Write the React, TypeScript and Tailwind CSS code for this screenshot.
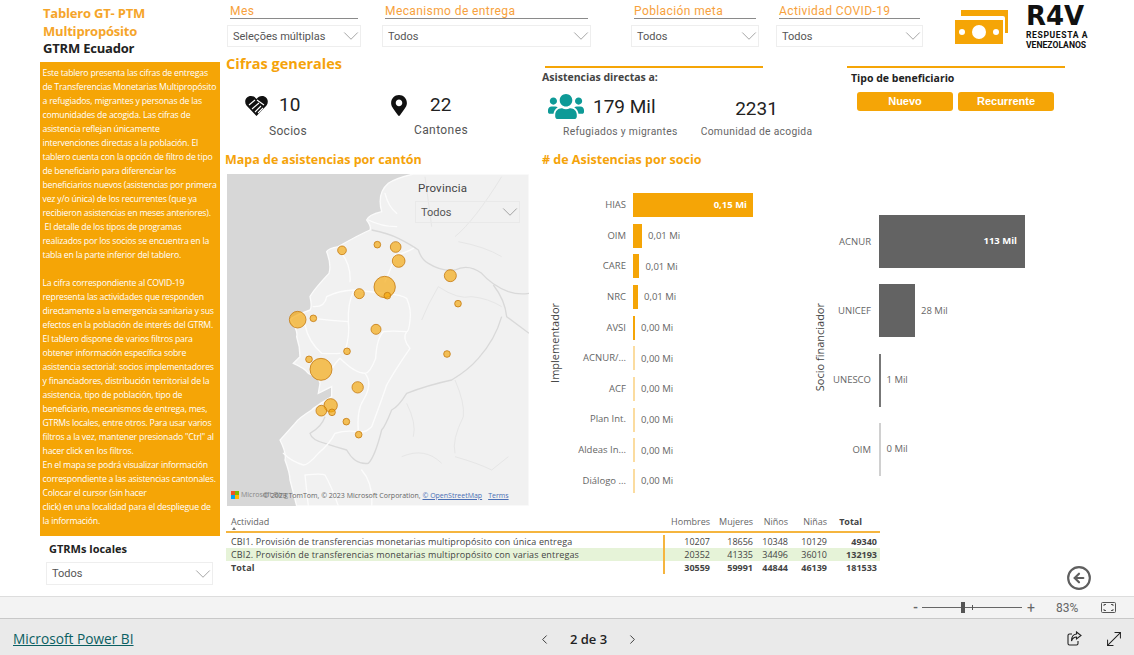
import { ChevronDown, ChevronLeft, ChevronRight, CircleArrowLeft, MoveDiagonal } from "lucide-react";
import { FaMapMarkerAlt, FaUsers } from "react-icons/fa";

const panelLines = [
  "Este tablero presenta las cifras de entregas",
  "de Transferencias Monetarias Multipropósito",
  "a refugiados, migrantes y personas de las",
  "comunidades de acogida. Las cifras de",
  "asistencia reflejan únicamente",
  "intervenciones directas a la población. El",
  "tablero cuenta con la opción de filtro de tipo",
  "de beneficiario para diferenciar los",
  "beneficiarios nuevos (asistencias por primera",
  "vez y/o única) de los recurrentes (que ya",
  "recibieron asistencias en meses anteriores).",
  "\u00a0El detalle de los tipos de programas",
  "realizados por los socios se encuentra en la",
  "tabla en la parte inferior del tablero.",
  "\u00a0",
  "La cifra correspondiente al COVID-19",
  "representa las actividades que responden",
  "directamente a la emergencia sanitaria y sus",
  "efectos en la población de interés del GTRM.",
  "El tablero dispone de varios filtros para",
  "obtener información específica sobre",
  "asistencia sectorial: socios implementadores",
  "y financiadores, distribución territorial de la",
  "asistencia, tipo de población, tipo de",
  "beneficiario, mecanismos de entrega, mes,",
  "GTRMs locales, entre otros. Para usar varios",
  "filtros a la vez, mantener presionado \"Ctrl\" al",
  "hacer click en los filtros.",
  "En el mapa se podrá visualizar información",
  "correspondiente a las asistencias cantonales.",
  "Colocar el cursor (sin hacer",
  "click) en una localidad para el despliegue de",
  "la información.",
];

const bubbles = [
  [351, 241, 13], [457, 224, 10], [512, 231, 16], [521, 273, 19], [676, 317, 18], [479, 351, 32],
  [487, 377, 10], [403, 371, 15], [699, 401, 10], [218, 449, 25], [265, 445, 10], [453, 478, 15],
  [366, 544, 10], [666, 552, 10], [252, 568, 10], [288, 598, 33], [398, 652, 17], [317, 706, 20],
  [289, 722, 16], [321, 727, 10], [364, 755, 10], [401, 794, 10],
];

const roads = [
  "M350 250 Q378 285 375 335",
  "M265 410 Q300 412 305 380 Q340 362 385 360 Q440 365 485 370 Q530 375 545 385 Q560 420 555 450 Q552 485 545 485 Q500 482 475 485",
  "M385 365 Q368 400 370 455 Q375 495 360 545",
  "M265 445 Q320 452 370 455",
  "M240 465 Q250 515 290 550 Q320 552 345 550",
  "M475 485 Q455 505 452 565 Q435 610 420 610 Q390 610 345 565 Q325 585 320 600",
  "M545 485 Q530 505 555 535 Q510 600 485 645 Q470 690 440 770 Q420 790 400 785 Q360 780 330 790 Q315 820 280 850 Q250 885 235 885 Q200 875 175 850",
  "M420 610 Q445 640 415 690 Q395 720 400 785",
  "M480 335 Q505 280 510 255 Q540 250 565 235",
  "M240 915 Q290 910 300 915 Q320 950 340 1008 M240 915 L250 1008 M410 900 Q445 940 440 1008",
  "M480 70 Q490 110 515 130 M430 150 Q470 170 515 170",
];

const implementers = [
  { name: "HIAS", w: 120, value: "0,15 Mi", light: false },
  { name: "OIM", w: 8.5, value: "0,01 Mi", light: false },
  { name: "CARE", w: 6, value: "0,01 Mi", light: false },
  { name: "NRC", w: 4.5, value: "0,01 Mi", light: false },
  { name: "AVSI", w: 1.5, value: "0,00 Mi", light: false },
  { name: "ACNUR/...", w: 1.5, value: "0,00 Mi", light: true },
  { name: "ACF", w: 1.5, value: "0,00 Mi", light: true },
  { name: "Plan Int.", w: 1.5, value: "0,00 Mi", light: true },
  { name: "Aldeas In...", w: 1.5, value: "0,00 Mi", light: true },
  { name: "Diálogo ...", w: 1.5, value: "0,00 Mi", light: true },
];

const funders = [
  { name: "ACNUR", w: 146, value: "113 Mil", color: "bg-[#636363]" },
  { name: "UNICEF", w: 36, value: "28 Mil", color: "bg-[#636363]" },
  { name: "UNESCO", w: 1.5, value: "1 Mil", color: "bg-[#777777]" },
  { name: "OIM", w: 1.5, value: "0 Mil", color: "bg-[#d0d0d0]" },
];

const tableRows = [
  { name: "CBI1. Provisión de transferencias monetarias multipropósito con única entrega", cells: ["10207", "18656", "10348", "10129", "49340"], bold: false, tint: "" },
  { name: "CBI2. Provisión de transferencias monetarias multipropósito con varias entregas", cells: ["20352", "41335", "34496", "36010", "132193"], bold: false, tint: "bg-[#e6f3d8]" },
  { name: "Total", cells: ["30559", "59991", "44844", "46139", "181533"], bold: true, tint: "" },
];

function Dropdown({ label, className = "" }: { label: string; className?: string }) {
  return (
    <div className={`flex h-[22px] items-center justify-between overflow-hidden border border-[#eeeeee] bg-white pl-[5px] font-['Roboto',sans-serif] text-[11px] text-[#555555] ${className}`}>
      <span className="pt-[2px]">{label}</span>
      <ChevronDown className="-mr-[4px] h-[26px] w-[26px] shrink-0 text-[#8a8a8a]" strokeWidth={0.7} />
    </div>
  );
}

function Filter({ title, value, width, className = "" }: { title: string; value: string; width: string; className?: string }) {
  return (
    <div className={`shrink-0 ${width} ${className}`}>
      <div className="mx-[3px] h-[16px] border-b border-[#8a8a8a] pt-[2px] font-['Roboto',sans-serif] text-[12px] leading-[13px] tracking-[0.4px] text-[#f7a13c]">{title}</div>
      <Dropdown label={value} className="mt-[6px]" />
    </div>
  );
}

function MoneyIcon() {
  return (
    <svg width="53" height="34" viewBox="0 0 53 34" className="shrink-0">
      <path d="M6 0 H18 Q24 -1 30 0 H53 V23 H50 V8 Q50 6 48 6 H6 Z" fill="#f5a506" />
      <rect x="0" y="10" width="48" height="24" fill="#f5a506" />
      <circle cx="24" cy="22" r="7" fill="#fff" />
      <circle cx="7" cy="22" r="3" fill="#fff" />
      <circle cx="41" cy="22" r="3" fill="#fff" />
    </svg>
  );
}

function HeartHands() {
  return (
    <svg width="23" height="21" viewBox="0 0 23 21" className="shrink-0">
      <path d="M11.5 21 L1.5 10.5 C-1.5 6.5 1 1 6 1 C8.5 1 10 2 11.5 4 C13 2 14.5 1 17 1 C22 1 24.5 6.5 21.5 10.5 Z" fill="#111" />
      <path d="M4 10 L10 5 M7 14 L14 8 M10 17 L16 11 M13 18 L18 13 M12 5 L19 10" stroke="#fff" strokeWidth="1.1" fill="none" />
    </svg>
  );
}

function ShareIcon() {
  return (
    <svg width="15" height="15" viewBox="0 0 15 15" fill="none" stroke="#222222" strokeWidth="1.1" className="shrink-0">
      <path d="M5 3 H2.5 Q1 3 1 4.5 V12.5 Q1 14 2.5 14 H9.5 Q11 14 11 12.5 V10" />
      <path d="M9.5 1 L14 4.5 L9.5 8 V6 Q6 6 4.5 10 Q4.5 3.5 9.5 3 Z" />
    </svg>
  );
}

function EcuadorMap() {
  return (
    <div className="relative ml-[2px] h-[332px] w-[302px] overflow-hidden">
      <svg viewBox="6 12 906 996" className="h-full w-full">
        <rect x="6" y="12" width="906" height="996" fill="#d7d7d7" />
        <path
          d="M565 12 Q510 25 490 40 Q455 70 470 125 Q430 135 425 150 Q440 170 435 180 Q400 195 340 230 Q310 235 305 245 Q320 285 312 310 Q265 360 255 380 Q262 410 255 420 Q200 440 195 450 Q220 480 215 500 Q225 530 225 560 L205 580 Q240 595 250 610 Q285 625 285 640 L280 670 L320 650 L320 680 Q270 710 260 720 Q220 745 210 760 L165 810 Q185 850 180 870 Q195 910 195 930 L215 1008 L912 1008 L912 12 Z"
          fill="#f1f1f1"
          stroke="#fbfbfb"
          strokeWidth="4"
        />
        <path
          d="M440 180 Q490 190 520 205 Q560 225 580 240 Q590 270 610 280 Q650 305 690 300 Q730 280 770 310 Q800 345 850 365 Q880 375 912 370 M805 345 Q840 390 845 440 L912 490 M830 440 Q810 510 760 565 Q730 600 680 630 Q610 645 545 670 Q520 710 500 720 Q480 770 470 780 Q450 860 430 880 Q390 885 365 840 Q330 830 300 820 Q260 810 255 790 Q290 770 300 740"
          fill="none"
          stroke="#d9d9d9"
          strokeWidth="4"
          strokeLinejoin="round"
        />
        <path
          d="M590 450 Q610 400 640 350 Q700 390 740 380 Q790 385 830 410 M530 860 Q600 830 650 880 M690 630 Q720 700 715 740 Q680 810 690 850 M545 700 Q575 760 565 800 M690 860 Q760 880 800 900 L850 860 M620 170 Q615 130 600 20 M690 200 Q750 150 830 20 M700 215 Q780 230 830 260"
          fill="none"
          stroke="#e6e6e6"
          strokeWidth="3"
        />
        {roads.map((d, i) => (
          <path key={i} d={d} fill="none" stroke="#fcfcfc" strokeWidth="4" strokeLinejoin="round" strokeLinecap="round" />
        ))}
        {bubbles.map(([cx, cy, r], i) => (
          <circle key={i} cx={cx} cy={cy} r={r} fill="#f5a506" fillOpacity="0.66" stroke="#c47a12" strokeWidth="2.4" />
        ))}
      </svg>

      {/* slicer que queda encima del mapa */}
      <div className="absolute left-[188px] top-[7px] w-[105px]">
        <div className="pl-[3px] font-['Roboto',sans-serif] text-[11.5px] leading-[14px] tracking-[0.2px] text-[#444444]">Provincia</div>
        <div className="mt-[6px] flex h-[22px] items-center justify-between overflow-hidden border border-[#e9e9e9] pl-[5px] font-['Roboto',sans-serif] text-[11px] text-[#555555]">
          <span className="pt-[2px]">Todos</span>
          <ChevronDown className="-mr-[4px] h-[26px] w-[26px] shrink-0 text-[#8a8a8a]" strokeWidth={0.7} />
        </div>
      </div>

      {/* marca de Bing y creditos, en el original van solapados */}
      <div className="absolute bottom-[7px] left-[4px] flex items-center">
        <span className="grid h-[8px] w-[8px] grid-cols-2">
          <i className="bg-[#f25022]" />
          <i className="bg-[#7fba00]" />
          <i className="bg-[#00a4ef]" />
          <i className="bg-[#ffb900]" />
        </span>
        <span className="ml-[2px] whitespace-nowrap text-[7px] leading-[8px] text-[#888888]">Microsoft Bing</span>
      </div>
      <div className="absolute bottom-[5px] left-[36px] whitespace-nowrap font-['Open_Sans',sans-serif] text-[7px] leading-[10px] text-[#666666]">
        <span>© 2023 TomTom, © 2023 Microsoft Corporation, </span>
        <span className="text-[#4a6fb5] underline">© OpenStreetMap</span>
        <span className="ml-[6px] text-[#4a6fb5] underline">Terms</span>
      </div>
    </div>
  );
}

export default function App() {
  return (
    <div className="flex h-[655px] w-[1134px] flex-col overflow-hidden bg-white font-['Open_Sans',sans-serif]">
      <div className="flex h-[596px] shrink-0 pl-[40px]">
        {/* columna izquierda */}
        <div className="w-[180px] shrink-0">
          <div className="h-[62px] pl-[3px] pt-[5px] text-[13px] font-bold leading-[17.5px] tracking-[-0.2px]">
            <div className="text-[#f5a52a]">Tablero GT- PTM</div>
            <div className="text-[#f5a52a]">Multipropósito</div>
            <div className="text-[#222222]">GTRM Ecuador</div>
          </div>
          <div className="h-[474px] bg-[#f5a506] pl-[2.5px] pt-[4px] text-[8.7px] leading-[14px] tracking-[-0.2px] text-white">
            {panelLines.map((line, i) => (
              <div key={i} className="whitespace-nowrap">{line}</div>
            ))}
          </div>
          <div className="pl-[9px] pt-[5px] text-[11px] font-bold leading-[16px] text-[#222222]">GTRMs locales</div>
          <Dropdown label="Todos" className="ml-[6px] mt-[5px] !h-[23px] w-[167px]" />
        </div>

        <div className="ml-[5px] w-[909px] shrink-0">
          {/* filtros */}
          <div className="flex h-[46px] items-start pl-[2px] pt-[3px]">
            <Filter title="Mes" value="Seleções múltiplas" width="w-[134px]" />
            <Filter title="Mecanismo de entrega" value="Todos" width="w-[209px]" className="ml-[21px]" />
            <Filter title="Población meta" value="Todos" width="w-[128px]" className="ml-[40px]" />
            <Filter title="Actividad COVID-19" value="Todos" width="w-[147px]" className="ml-[17px]" />
            <div className="ml-[32px] mt-[7px]">
              <MoneyIcon />
            </div>
            <div className="ml-[18px] w-[62px] shrink-0 whitespace-nowrap font-['Roboto',sans-serif] text-[#111111]">
              <div className="h-[26px] font-['DejaVu_Sans',sans-serif] text-[26px] font-bold leading-[26px]">R4V</div>
              <div className="mt-[1px] text-[8.6px] font-bold leading-[10px] tracking-[0.6px]">RESPUESTA A</div>
              <div className="text-[8.6px] font-bold leading-[10px]">VENEZOLANOS</div>
            </div>
          </div>

          {/* cifras */}
          <div className="flex h-[104px]">
            <div className="w-[317px] shrink-0">
              <div className="pl-[1px] pt-[8px] text-[14.5px] font-bold leading-[20px] text-[#f5a30a]">Cifras generales</div>
              <div className="flex pt-[19px]">
                <div className="ml-[20px] w-[130px]">
                  <div className="flex h-[24px] items-center">
                    <HeartHands />
                    <span className="ml-[11px] font-['Roboto',sans-serif] text-[19px] text-[#222222]">10</span>
                  </div>
                  <div className="mt-[5px] w-[86px] text-center font-['Roboto',sans-serif] text-[12px] tracking-[0.3px] text-[#555555]">Socios</div>
                </div>
                <div className="ml-[16px] w-[110px]">
                  <div className="flex h-[24px] items-center">
                    <FaMapMarkerAlt className="h-[21px] w-[16px] text-[#111111]" />
                    <span className="ml-[23px] font-['Roboto',sans-serif] text-[19px] text-[#222222]">22</span>
                  </div>
                  <div className="mt-[4px] w-[100px] text-center font-['Roboto',sans-serif] text-[12px] tracking-[0.4px] text-[#555555]">Cantones</div>
                </div>
              </div>
            </div>

            <div className="w-[305px] shrink-0">
              <div className="ml-[3px] mt-[20px] h-[2px] w-[218px] bg-[#f5a506]" />
              <div className="pt-[2px] text-[10.5px] font-bold leading-[14px] text-[#444444]">Asistencias directas a:</div>
              <div className="flex pt-[9px]">
                <div className="w-[150px]">
                  <div className="flex h-[26px] items-center pl-[6px]">
                    <FaUsers className="h-[29px] w-[36px] text-[#0e9a97]" />
                    <span className="ml-[9px] pt-[2px] font-['Roboto',sans-serif] text-[19px] text-[#222222]">179 Mil</span>
                  </div>
                  <div className="mt-[5px] pl-[21px] font-['Roboto',sans-serif] text-[10.3px] tracking-[0.3px] text-[#666666]">Refugiados y migrantes</div>
                </div>
                <div className="ml-[2px] w-[125px] text-center">
                  <div className="flex h-[26px] items-center justify-center pt-[6px] font-['Roboto',sans-serif] text-[19px] text-[#222222]">2231</div>
                  <div className="mt-[5px] whitespace-nowrap font-['Roboto',sans-serif] text-[10.3px] tracking-[0.3px] text-[#666666]">Comunidad de acogida</div>
                </div>
              </div>
            </div>

            <div className="w-[218px] shrink-0">
              <div className="mt-[20px] h-[2px] w-[218px] bg-[#f5a506]" />
              <div className="pl-[4px] pt-[3px] text-[10.5px] font-bold leading-[14px] text-[#222222]">Tipo de beneficiario</div>
              <div className="flex gap-[5px] pl-[10px] pt-[7px]">
                <div className="flex h-[19px] w-[96px] items-center justify-center rounded-[3px] bg-[#f5a506] font-['Liberation_Sans',sans-serif] text-[11px] font-bold text-white">Nuevo</div>
                <div className="flex h-[19px] w-[96px] items-center justify-center rounded-[3px] bg-[#f5a506] font-['Liberation_Sans',sans-serif] text-[11px] font-bold text-white">Recurrente</div>
              </div>
            </div>
          </div>

          {/* mapa y graficos */}
          <div className="flex h-[360px]">
            <div className="w-[317px] shrink-0">
              <div className="h-[24px] text-[12.5px] font-bold leading-[20px] text-[#f5a30a]">Mapa de asistencias por cantón</div>
              <EcuadorMap />
            </div>
            <div className="w-[270px] shrink-0">
              <div className="h-[24px] text-[12.5px] font-bold leading-[20px] text-[#f5a30a]">
                # de Asistencias por socio
              </div>
              <div className="flex items-center pt-[19px]">
                <div className="flex w-[23px] shrink-0 justify-center pl-[4px]">
                  <span className="rotate-180 whitespace-nowrap text-[11px] text-[#444444] [writing-mode:vertical-rl]">Implementador</span>
                </div>
                <div>
                  {implementers.map((row, i) => (
                    <div key={row.name} className={`flex h-[24px] items-center ${i < 9 ? "mb-[6.67px]" : ""}`}>
                      <div className="w-[61px] shrink-0 whitespace-nowrap text-right text-[9.5px] text-[#666666]">{row.name}</div>
                      <div
                        className={`ml-[7px] flex h-full items-center justify-end ${row.light ? "bg-[#fbdca0]" : "bg-[#f5a506]"}`}
                        style={{ width: row.w }}
                      >
                        {i === 0 && <span className="pr-[6px] text-[9.5px] font-bold text-white">{row.value}</span>}
                      </div>
                      {i > 0 && <span className="ml-[6.5px] whitespace-nowrap pt-[1px] text-[9.5px] text-[#666666]">{row.value}</span>}
                    </div>
                  ))}
                </div>
              </div>
            </div>
            <div className="flex h-[360px] shrink-0 items-start pt-[65px]">
              <div className="flex h-[261px] w-[16px] shrink-0 items-center justify-center pt-[3px]">
                <span className="rotate-180 whitespace-nowrap text-[11px] text-[#444444] [writing-mode:vertical-rl]">Socio financiador</span>
              </div>
              <div>
                {funders.map((row, i) => (
                  <div key={row.name} className={`flex h-[53px] items-center ${i < 3 ? "mb-[16.3px]" : ""}`}>
                    <div className="w-[43px] shrink-0 pt-[1px] text-right text-[9.5px] text-[#666666]">{row.name}</div>
                    <div className={`ml-[8px] flex h-full items-center justify-end ${row.color}`} style={{ width: row.w }}>
                      {i === 0 && <span className="pr-[8px] text-[9.5px] font-bold text-white">{row.value}</span>}
                    </div>
                    {i > 0 && <span className="ml-[6px] whitespace-nowrap text-[9.5px] text-[#666666]">{row.value}</span>}
                  </div>
                ))}
              </div>
            </div>
          </div>

          {/* tabla */}
          <div className="flex">
            <div className="ml-[1px] w-[654px] shrink-0 font-['Open_Sans',sans-serif] text-[9px] leading-[13px] text-[#444444]">
              <div className="relative grid h-[23px] grid-cols-[439px_45px_43px_35px_39px_50px] border-b-2 border-[#f5b53f] pt-[5px] text-[#666666]">
                <div className="pl-[5px]">Actividad</div>
                <div className="text-right">Hombres</div>
                <div className="text-right">Mujeres</div>
                <div className="text-right">Niños</div>
                <div className="text-right">Niñas</div>
                <div className="pr-[15px] text-right font-bold text-[#444444]">Total</div>
                <span className="absolute left-[6px] top-[17px] h-0 w-0 border-x-[2.5px] border-b-[3px] border-x-transparent border-b-[#777777]" />
              </div>
              <div className="pt-[2px]">
                {tableRows.map((row) => (
                  <div key={row.name} className={`grid h-[13px] grid-cols-[439px_45px_43px_35px_39px_50px] ${row.tint} ${row.bold ? "font-bold" : ""}`}>
                    <div className="whitespace-nowrap border-r-2 border-[#f5b53f] pl-[5px] tracking-[0.15px]">{row.name}</div>
                    {row.cells.map((cell, c) => (
                      <div key={c} className={`text-right ${c === 4 ? "font-bold" : ""}`}>{cell}</div>
                    ))}
                  </div>
                ))}
              </div>
            </div>
            <div className="ml-[186px] pt-[55px]">
              <CircleArrowLeft className="h-[26px] w-[26px] text-[#5f5f5f]" strokeWidth={2} />
            </div>
          </div>
        </div>
      </div>

      {/* barra de zoom */}
      <div className="flex h-[22px] shrink-0 items-center border-t border-[#dddddd] bg-[#f3f3f3] font-['Roboto',sans-serif] text-[#666666]">
        <span className="ml-[913px] w-[6px] text-[13px] font-bold leading-none">-</span>
        <div className="relative ml-[3px] h-px w-[100px] bg-[#666666]">
          <span className="absolute left-[39px] top-[-5px] h-[11px] w-[4px] bg-[#555555]" />
          <span className="absolute left-[50px] top-[-2px] h-[5px] w-px bg-[#555555]" />
        </div>
        <span className="ml-[5px] text-[14px] leading-none">+</span>
        <span className="ml-[21px] w-[23px] text-[12px]">83%</span>
        <svg width="15" height="11" viewBox="0 0 15 11" className="ml-[22px]" fill="none" stroke="#555555">
          <rect x="0.5" y="0.5" width="14" height="10" rx="1" />
          <path d="M3 4 V2.5 H5 M10 2.5 H12 V4 M12 7 V8.5 H10 M5 8.5 H3 V7" />
        </svg>
      </div>

      {/* pie de Power BI */}
      <div className="relative flex h-[37px] shrink-0 items-center justify-between border-t border-[#c8c8c8] bg-[#eaeaea] pl-[13px] pr-[9px] pt-[3px]">
        <span className="text-[13.7px] leading-none text-[#0b5f62] underline">Microsoft Power BI</span>
        <div className="absolute left-[537px] top-[11px] flex items-center">
          <ChevronLeft className="h-[15px] w-[15px] text-[#333333]" strokeWidth={1.5} />
          <span className="ml-[16px] w-[41px] text-center text-[13px] font-semibold text-[#222222]">2 de 3</span>
          <ChevronRight className="ml-[16px] h-[15px] w-[15px] text-[#333333]" strokeWidth={1.5} />
        </div>
        <div className="flex items-center gap-[21px]">
          <ShareIcon />
          <MoveDiagonal className="h-[22px] w-[22px] text-[#222222]" strokeWidth={1.1} />
        </div>
      </div>
    </div>
  );
}
